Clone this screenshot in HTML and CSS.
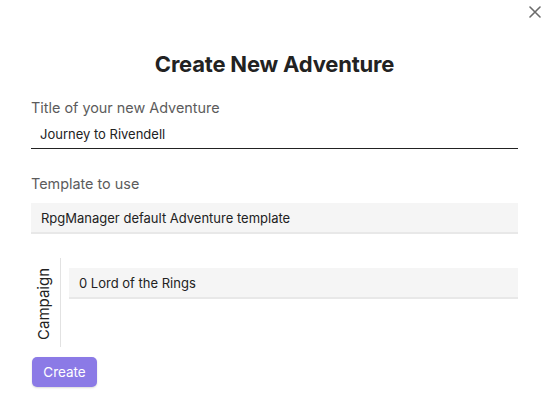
FILE: index.html
```html
<!DOCTYPE html>
<html>
<head>
<meta charset="utf-8">
<link rel="stylesheet" href="styles.css">
</head>
<body>
<div class="modal">
  <button class="close" aria-label="Close">
    <svg width="12" height="12" viewBox="0 0 12 12"><path d="M1 1L11 11M11 1L1 11" stroke="#6b6b6b" stroke-width="1.6" stroke-linecap="round"/></svg>
  </button>
  <h1 class="title">Create New Adventure</h1>
  <div class="field">
    <div class="label">Title of your new Adventure</div>
    <div class="input">Journey to Rivendell</div>
  </div>
  <div class="field">
    <div class="label">Template to use</div>
    <div class="select">RpgManager default Adventure template</div>
  </div>
  <div class="campaign">
    <div class="campaign-label"><span>Campaign</span></div>
    <div class="campaign-body">
      <div class="select">0 Lord of the Rings</div>
    </div>
  </div>
  <button class="create">Create</button>
</div>
</body>
</html>
```
FILE: styles.css
```css
* { box-sizing: border-box; }
html, body { margin: 0; padding: 0; background: #fff; }
body {
  font-family: Inter, "Noto Sans", sans-serif;
  color: #222;
  width: 548px;
  height: 402px;
  overflow: hidden;
}
.modal {
  position: relative;
  padding: 0 30px 0 31px;
}
.close {
  position: absolute;
  top: 5px;
  right: 6px;
  width: 14px;
  height: 14px;
  padding: 1px;
  border: 0;
  background: none;
  display: flex;
  align-items: center;
  justify-content: center;
}
.title {
  margin: 0;
  padding-top: 49px;
  height: 98px;
  text-align: center;
  font-size: 22px;
  font-weight: 700;
  line-height: 30px;
  color: #222;
  letter-spacing: -0.2px;
}
.label {
  font-size: 14.4px;
  line-height: 20px;
  color: #5c5c5c;
}
.field:first-of-type .label { height: 17px; }
.input {
  margin-top: 8px;
  padding: 2px 9px 4px;
  font-size: 13px;
  line-height: 18px;
  color: #222;
  border-bottom: 1px solid #222;
  height: 26px;
}
.field:nth-of-type(2) { margin-top: 25px; }
.field:nth-of-type(2) .select { margin-top: 9px; }
.select {
  height: 31px;
  background: #f5f5f5;
  border-bottom: 2px solid #e8e8e8;
  padding: 6px 10px;
  font-size: 13px;
  line-height: 18px;
  color: #222;
}
.campaign {
  display: flex;
  margin-top: 24px;
  height: 89px;
}
.campaign-label {
  width: 30px;
  border-right: 1px solid #e2e2e2;
  padding-top: 10px;
  padding-left: 5px;
  display: flex;
  align-items: flex-start;
  justify-content: flex-start;
}
.campaign-label span {
  writing-mode: vertical-rl;
  transform: rotate(180deg);
  font-size: 15px;
  line-height: 15px;
  color: #222;
}
.campaign-body {
  flex: 1;
  padding-left: 8px;
  padding-top: 10px;
}
.create {
  margin-top: 10px;
  margin-left: 1px;
  width: 65px;
  height: 30px;
  border: 0;
  border-radius: 5px;
  background: #8b7ae6;
  color: #fff;
  font-family: Inter, "Noto Sans", sans-serif;
  font-size: 13.5px;
  box-shadow: 0 1px 2px rgba(0,0,0,0.15);
  padding: 0;
}
```
